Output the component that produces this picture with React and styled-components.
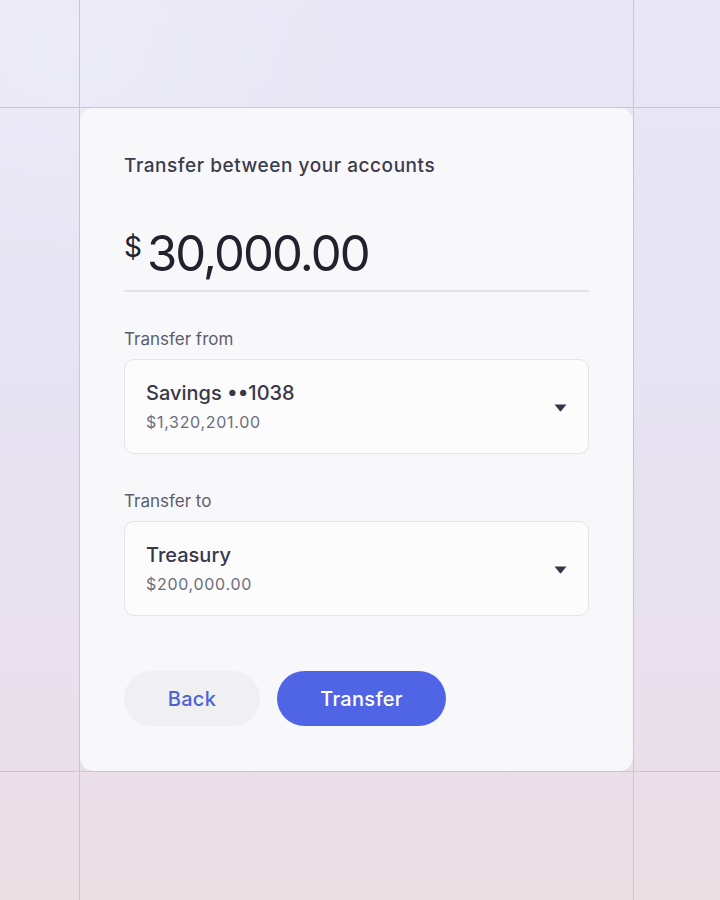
import React from "react";
import styled, { createGlobalStyle } from "styled-components";

const Global = createGlobalStyle`
  html, body { margin: 0; padding: 0; }
  body { font-family: Inter, "Noto Sans", sans-serif; }
`;

const Page = styled.div`
  width: 720px;
  height: 900px;
  display: grid;
  grid-template-columns: 79px 1px 553px 1px 1fr;
  grid-template-rows: 107px 1px 663px 1px 1fr;
  background:
    radial-gradient(ellipse 60% 40% at 10% 5%, rgba(238, 237, 249, 0.7), rgba(238, 237, 249, 0) 70%),
    linear-gradient(180deg, #e9e7f5 0%, #e6e3f2 45%, #e9e0ec 78%, #ecdfe4 100%);
  overflow: hidden;
`;

const VLine = styled.div`
  grid-column: ${(p) => p.col};
  grid-row: 1 / -1;
  background: #c3c2f4;
`;

const HLine = styled.div`
  grid-row: ${(p) => p.row};
  grid-column: 1 / -1;
  background: #c3c2f4;
`;

const Card = styled.div`
  grid-column: 3 / 4;
  grid-row: 3 / 4;
  position: relative;
  z-index: 1;
  background: #f8f8fa;
  border-radius: 14px;
  padding: 46px 44px 0 44px;
  display: flex;
  flex-direction: column;
  box-sizing: border-box;
`;

const Title = styled.h1`
  margin: 0;
  font-size: 19px;
  font-weight: 500;
  color: #3b3b4d;
  line-height: 24px;
  letter-spacing: 0.55px;
`;

const AmountRow = styled.div`
  margin-top: 48px;
  display: flex;
  align-items: flex-start;
  gap: 5px;
  padding-bottom: 8px;
  border-bottom: 2px solid #e2e2e7;
  color: #22222e;
`;

const Currency = styled.span`
  font-size: 28px;
  line-height: 28px;
  margin-top: 7px;
  font-weight: 400;
`;

const Amount = styled.span`
  font-size: 49px;
  line-height: 56px;
  font-weight: 400;
  letter-spacing: -1.9px;
`;

const Label = styled.div`
  font-size: 17px;
  color: #5d5d6e;
  line-height: 20px;
  margin-top: ${(p) => p.top}px;
`;

const Select = styled.div`
  margin-top: 10px;
  height: 95px;
  box-sizing: border-box;
  border: 1px solid #e4e4ea;
  border-radius: 10px;
  background: #fcfcfd;
  display: flex;
  align-items: center;
  justify-content: space-between;
  padding: 0 21px 0 21px;
`;

const SelectText = styled.div`
  display: flex;
  flex-direction: column;
  gap: 7px;
`;

const AccountName = styled.div`
  font-size: 20px;
  font-weight: 500;
  color: #383849;
  line-height: 24px;
`;

const Balance = styled.div`
  font-size: 16px;
  color: #6d6d7d;
  line-height: 20px;
  letter-spacing: 0.7px;
`;

const Caret = styled.svg`
  width: 13px;
  height: 8px;
  margin-top: 2px;
`;

const Buttons = styled.div`
  margin-top: 55px;
  display: flex;
  gap: 17px;
`;

const Button = styled.button`
  height: 55px;
  width: ${(p) => p.w}px;
  border: none;
  border-radius: 28px;
  font-family: inherit;
  font-size: 20px;
  font-weight: 500;
  letter-spacing: 0.3px;
  background: ${(p) => (p.primary ? "#5064e6" : "#f0f0f2")};
  color: ${(p) => (p.primary ? "#ffffff" : "#4f5fd6")};
  cursor: pointer;
`;

function CaretIcon() {
  return (
    <Caret viewBox="0 0 13 8">
      <path d="M0.5 0.5 H12.5 L7.2 7 Q6.5 7.8 5.8 7 Z" fill="#363648" />
    </Caret>
  );
}

function AccountSelect({ name, balance }) {
  return (
    <Select>
      <SelectText>
        <AccountName>{name}</AccountName>
        <Balance>{balance}</Balance>
      </SelectText>
      <CaretIcon />
    </Select>
  );
}

export default function App() {
  return (
    <>
      <Global />
      <Page>
        <VLine col={2} />
        <VLine col={4} />
        <HLine row={2} />
        <HLine row={4} />
        <Card>
          <Title>Transfer between your accounts</Title>
          <AmountRow>
            <Currency>$</Currency>
            <Amount>30,000.00</Amount>
          </AmountRow>
          <Label top={37}>Transfer from</Label>
          <AccountSelect name="Savings ••1038" balance="$1,320,201.00" />
          <Label top={37}>Transfer to</Label>
          <AccountSelect name="Treasury" balance="$200,000.00" />
          <Buttons>
            <Button w={136}>Back</Button>
            <Button primary w={169}>Transfer</Button>
          </Buttons>
        </Card>
      </Page>
    </>
  );
}
